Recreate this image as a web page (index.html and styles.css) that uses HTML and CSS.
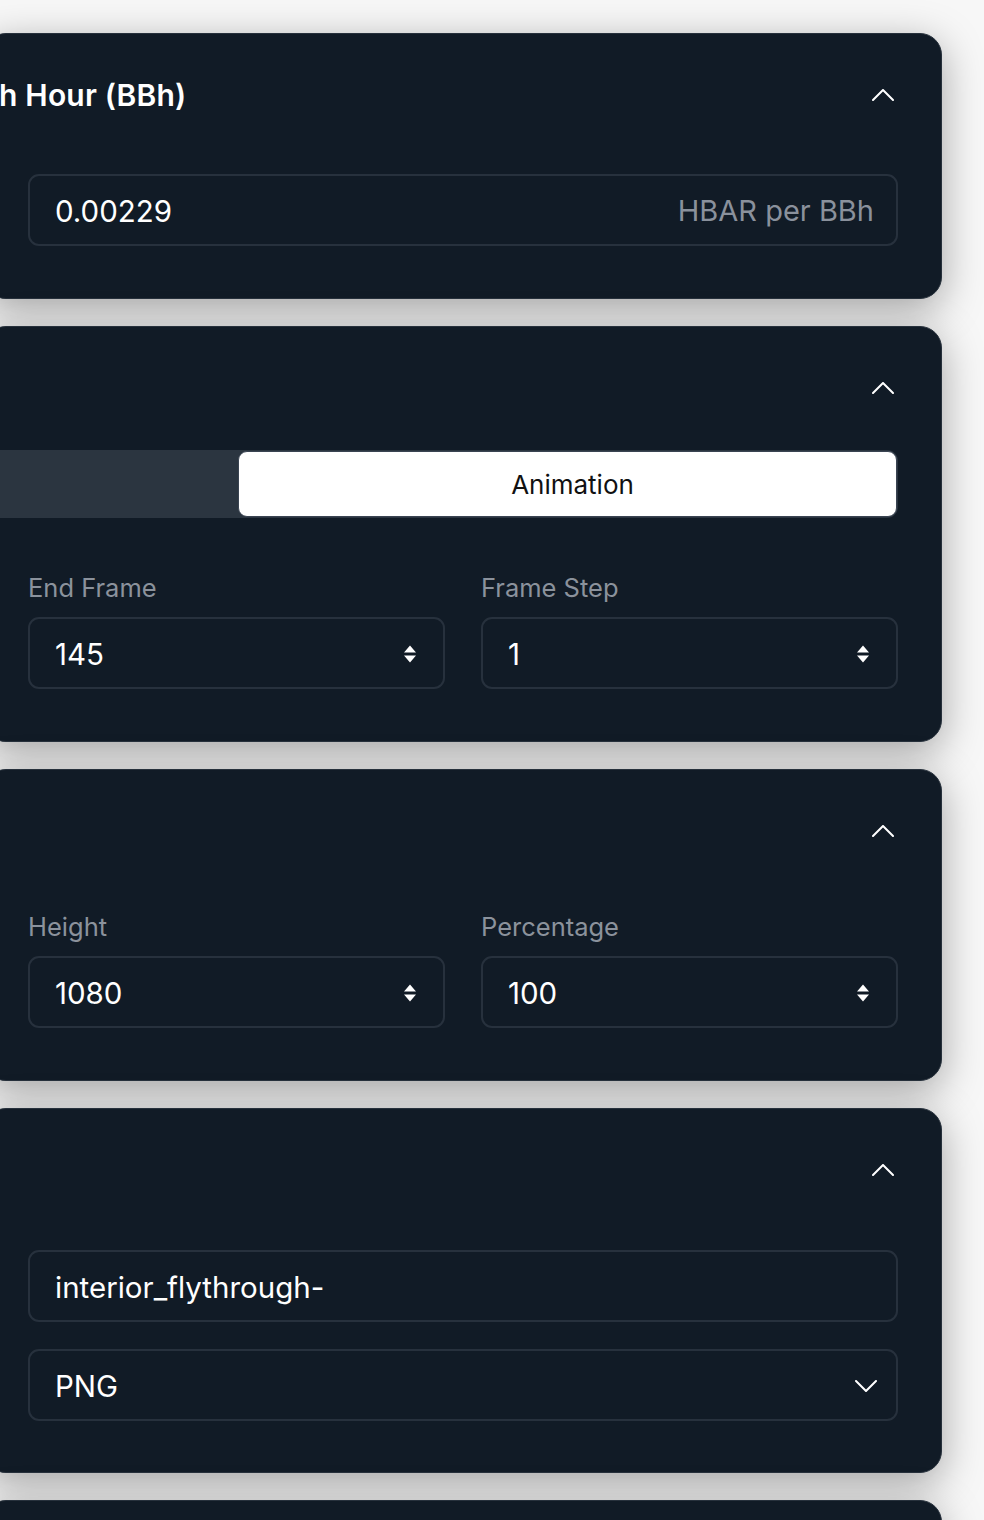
FILE: index.html
```html
<!DOCTYPE html>
<html lang="en">
<head>
<meta charset="utf-8">
<title>Render settings</title>
<link rel="stylesheet" href="styles.css">
</head>
<body>
<main class="stack">
  <section class="card">
    <header class="card-head">
      <h2 class="card-title">h Hour (BBh)</h2>
      <button class="toggle" aria-label="Collapse">
        <svg width="22" height="12" viewBox="0 0 22 12"><polyline points="1,11 11,1 21,11" fill="none" stroke="#fff" stroke-width="2" stroke-linecap="round" stroke-linejoin="round"/></svg>
      </button>
    </header>
    <div class="price-row">
      <div class="field">
        <span class="value">0.00229</span>
        <span class="suffix">HBAR per BBh</span>
      </div>
    </div>
  </section>

  <section class="card">
    <header class="card-head">
      <h2 class="card-title"></h2>
      <button class="toggle" aria-label="Collapse">
        <svg width="22" height="12" viewBox="0 0 22 12"><polyline points="1,11 11,1 21,11" fill="none" stroke="#fff" stroke-width="2" stroke-linecap="round" stroke-linejoin="round"/></svg>
      </button>
    </header>
    <div class="segmented">
      <div class="seg seg-off"></div>
      <div class="seg seg-on">Animation</div>
    </div>
    <div class="grid grid-frames">
      <label class="group">
        <span class="label">End Frame</span>
        <span class="field">
          <span class="value">145</span>
          <svg class="spin" width="12" height="18" viewBox="0 0 12 18"><path d="M0 7.5 L6 0.5 L12 7.5 Z M0 10.5 L6 17.5 L12 10.5 Z" fill="#fff"/></svg>
        </span>
      </label>
      <label class="group">
        <span class="label">Frame Step</span>
        <span class="field">
          <span class="value">1</span>
          <svg class="spin" width="12" height="18" viewBox="0 0 12 18"><path d="M0 7.5 L6 0.5 L12 7.5 Z M0 10.5 L6 17.5 L12 10.5 Z" fill="#fff"/></svg>
        </span>
      </label>
    </div>
  </section>

  <section class="card">
    <header class="card-head">
      <h2 class="card-title"></h2>
      <button class="toggle" aria-label="Collapse">
        <svg width="22" height="12" viewBox="0 0 22 12"><polyline points="1,11 11,1 21,11" fill="none" stroke="#fff" stroke-width="2" stroke-linecap="round" stroke-linejoin="round"/></svg>
      </button>
    </header>
    <div class="grid grid-size">
      <label class="group">
        <span class="label">Height</span>
        <span class="field">
          <span class="value">1080</span>
          <svg class="spin" width="12" height="18" viewBox="0 0 12 18"><path d="M0 7.5 L6 0.5 L12 7.5 Z M0 10.5 L6 17.5 L12 10.5 Z" fill="#fff"/></svg>
        </span>
      </label>
      <label class="group">
        <span class="label">Percentage</span>
        <span class="field">
          <span class="value">100</span>
          <svg class="spin" width="12" height="18" viewBox="0 0 12 18"><path d="M0 7.5 L6 0.5 L12 7.5 Z M0 10.5 L6 17.5 L12 10.5 Z" fill="#fff"/></svg>
        </span>
      </label>
    </div>
  </section>

  <section class="card card-output">
    <header class="card-head">
      <h2 class="card-title"></h2>
      <button class="toggle" aria-label="Collapse">
        <svg width="22" height="12" viewBox="0 0 22 12"><polyline points="1,11 11,1 21,11" fill="none" stroke="#fff" stroke-width="2" stroke-linecap="round" stroke-linejoin="round"/></svg>
      </button>
    </header>
    <div class="output-fields">
      <div class="field"><span class="value">interior_flythrough-</span></div>
      <div class="field select">
        <span class="value">PNG</span>
        <svg class="caret" width="22" height="12" viewBox="0 0 22 12"><polyline points="1,1 11,11 21,1" fill="none" stroke="#fff" stroke-width="2" stroke-linecap="round" stroke-linejoin="round"/></svg>
      </div>
    </div>
  </section>

  <section class="card card-next"></section>
</main>
</body>
</html>
```

FILE: styles.css
```css
* { box-sizing: border-box; }

html, body {
  margin: 0;
  padding: 0;
}

body {
  background: #f7f7f7;
  font-family: "Inter", "Noto Sans", sans-serif;
  color: #ffffff;
  overflow: hidden;
  height: 1520px;
}

.stack {
  display: flex;
  flex-direction: column;
  gap: 27px;
  width: 958px;
  margin-left: -16px;
  padding-top: 33px;
}

.card {
  background: #111b26;
  border: 1px solid #27313c;
  border-radius: 22px;
  padding: 43px 43px 52px 43px;
  box-shadow: 0 10px 40px rgba(0, 0, 0, 0.34);
}

.card-output { padding-bottom: 51px; }

.card-next { height: 220px; }

.card-head {
  display: flex;
  align-items: center;
  justify-content: space-between;
  height: 36px;
}

.card-title {
  margin: 0 0 0 -29px;
  font-size: 30px;
  font-weight: 600;
  line-height: 36px;
  letter-spacing: 0.2px;
  white-space: nowrap;
}

.toggle {
  width: 30px;
  height: 36px;
  padding: 0;
  border: 0;
  background: transparent;
  display: flex;
  align-items: center;
  justify-content: center;
}

.field {
  display: flex;
  align-items: center;
  justify-content: space-between;
  height: 72px;
  border: 2px solid #27313d;
  border-radius: 11px;
  padding: 1px 27px 0 25px;
  font-size: 29.5px;
  line-height: 36px;
  color: #ffffff;
}

.price-row { margin-top: 61px; }

.price-row .field { padding-right: 22px; }

.suffix {
  color: #8a919c;
  font-size: 29px;
}

.segmented {
  margin-top: 44px;
  margin-left: -80px;
  display: flex;
  height: 68px;
  background: #2b3540;
  border-radius: 11px;
  padding: 1px 1px 1px 0;
}

.seg {
  display: flex;
  align-items: center;
  justify-content: center;
  font-size: 26px;
  font-weight: 400;
}

.seg-off { width: 290px; }

.seg-on {
  flex: 1;
  background: #ffffff;
  color: #111111;
  border-radius: 9px;
  border: 1px solid #3a4452;
  padding-left: 10px;
}

.grid {
  display: grid;
  grid-template-columns: 1fr 1fr;
  column-gap: 36px;
}

.grid-frames { margin-top: 55px; }
.grid-size { margin-top: 63px; }

.group {
  display: flex;
  flex-direction: column;
  gap: 14px;
}

.label {
  font-size: 25.5px;
  line-height: 30px;
  color: #8b929c;
}

.output-fields {
  margin-top: 62px;
  display: flex;
  flex-direction: column;
  gap: 27px;
}

.select { padding-right: 19px; }

.spin, .caret { flex: none; }
```
